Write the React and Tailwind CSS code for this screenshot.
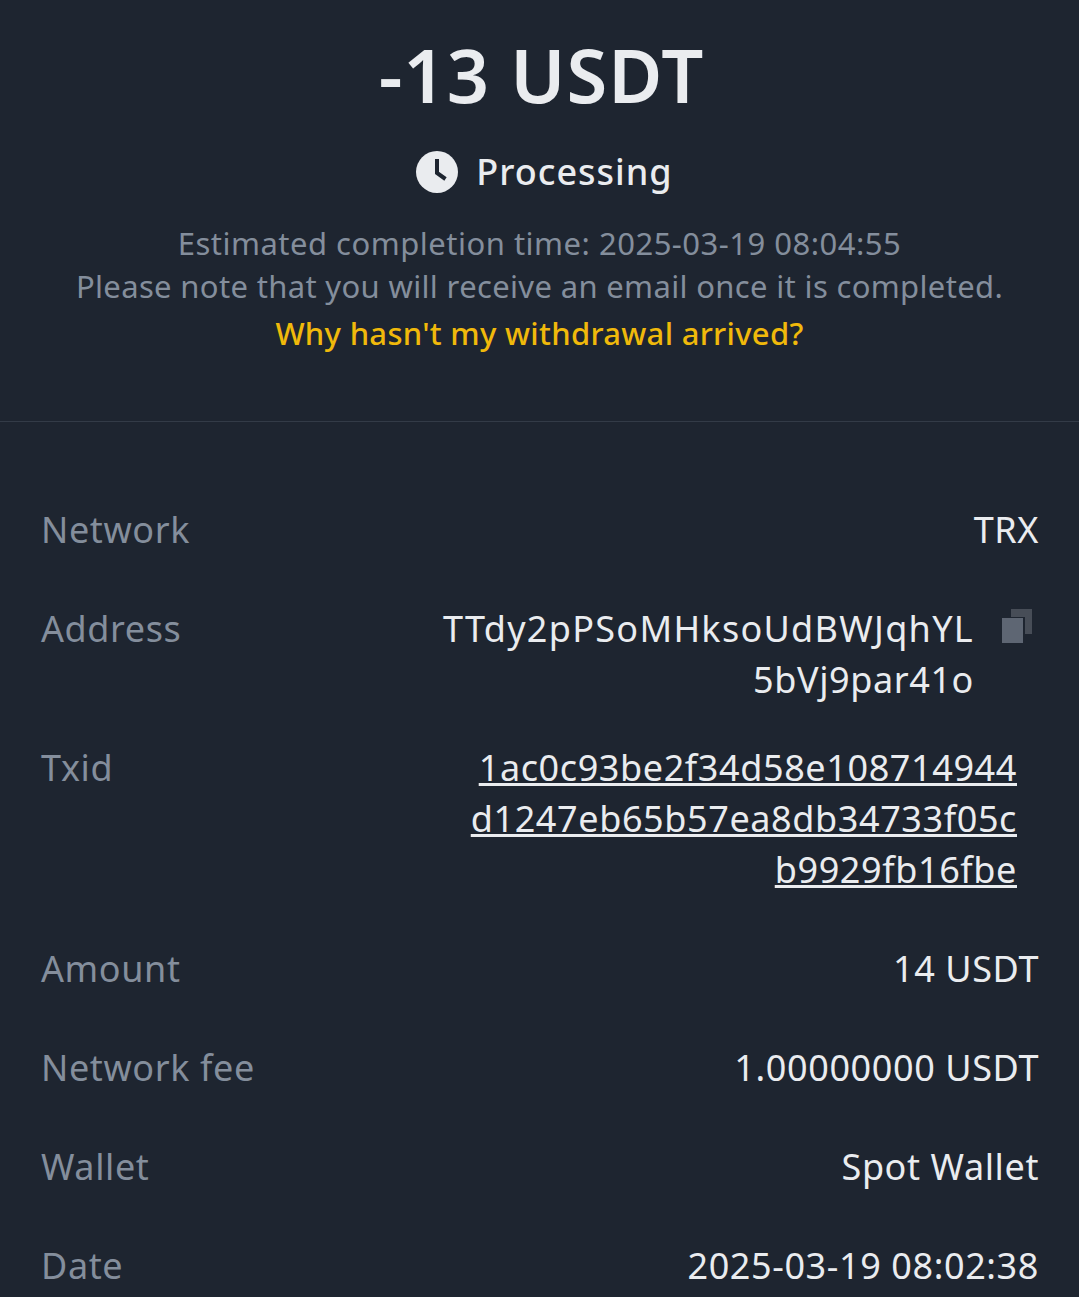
const Row = ({ label, children, className = '' }) => (
  <div className={`flex justify-between ${className}`}>
    <div className="text-[#848e9c] tracking-[0.6px]">{label}</div>
    <div className="text-right text-[#eaecef] tracking-[0.6px]">{children}</div>
  </div>
);

export default function App() {
  return (
    <div className="h-[1297px] overflow-hidden bg-[#1e2530] font-['Noto_Sans',sans-serif]">
      <div className="h-[422px] border-b border-[#333b47] pt-[33px] text-center">
        <div className="pl-[4px] text-[74px] font-semibold leading-[84px] tracking-[1px] text-[#eaecef]">-13 USDT</div>
        <div className="mt-[30px] flex items-center justify-center gap-[18px] pl-[10px] text-[36px] font-medium leading-[50px] tracking-[1px] text-[#eaecef]">
          <svg width="42" height="42" viewBox="0 0 42 42">
            <circle cx="21" cy="21" r="21" fill="#eaecef" />
            <path d="M21 8v14l8.5 6" fill="none" stroke="#1e2530" strokeWidth="4" />
          </svg>
          Processing
        </div>
        <div className="mt-[25px] text-[31px] leading-[43px] text-[#848e9c]">
          <div className="tracking-[0.5px]">Estimated completion time: 2025-03-19 08:04:55</div>
          <div className="tracking-[0.34px]">Please note that you will receive an email once it is completed.</div>
        </div>
        <div className="mt-[1px] text-[31px] font-medium leading-[48px] tracking-[0.3px] text-[#f0b90b]">Why hasn't my withdrawal arrived?</div>
      </div>
      <div className="pl-[41px] pr-[40px] pt-[82px] text-[36px] leading-[51px]">
        <Row label="Network">TRX</Row>
        <Row label="Address" className="mt-[48px]">
          <div className="mr-[6px] flex">
            <div className="text-right">
              <span className="tracking-[1.3px]">TTdy2pPSoMHksoUdBWJqhYL</span><br />5bVj9par41o
            </div>
            <svg className="ml-[27px] mt-[6px]" width="32" height="36" viewBox="0 0 32 36">
              <path d="M10 0h21v25h-7V8H10z" fill="#474d57" />
              <path d="M1 9h21v25H1z" fill="#5e6673" />
            </svg>
          </div>
        </Row>
        <Row label="Txid" className="mt-[37px]">
          <div className="mr-[22px] underline">1ac0c93be2f34d58e108714944<br />d1247eb65b57ea8db34733f05c<br />b9929fb16fbe</div>
        </Row>
        <Row label="Amount" className="mt-[48px]">14 USDT</Row>
        <Row label="Network fee" className="mt-[48px]">1.00000000 USDT</Row>
        <Row label="Wallet" className="mt-[48px]">Spot Wallet</Row>
        <Row label="Date" className="mt-[48px]">2025-03-19 08:02:38</Row>
      </div>
    </div>
  );
}
